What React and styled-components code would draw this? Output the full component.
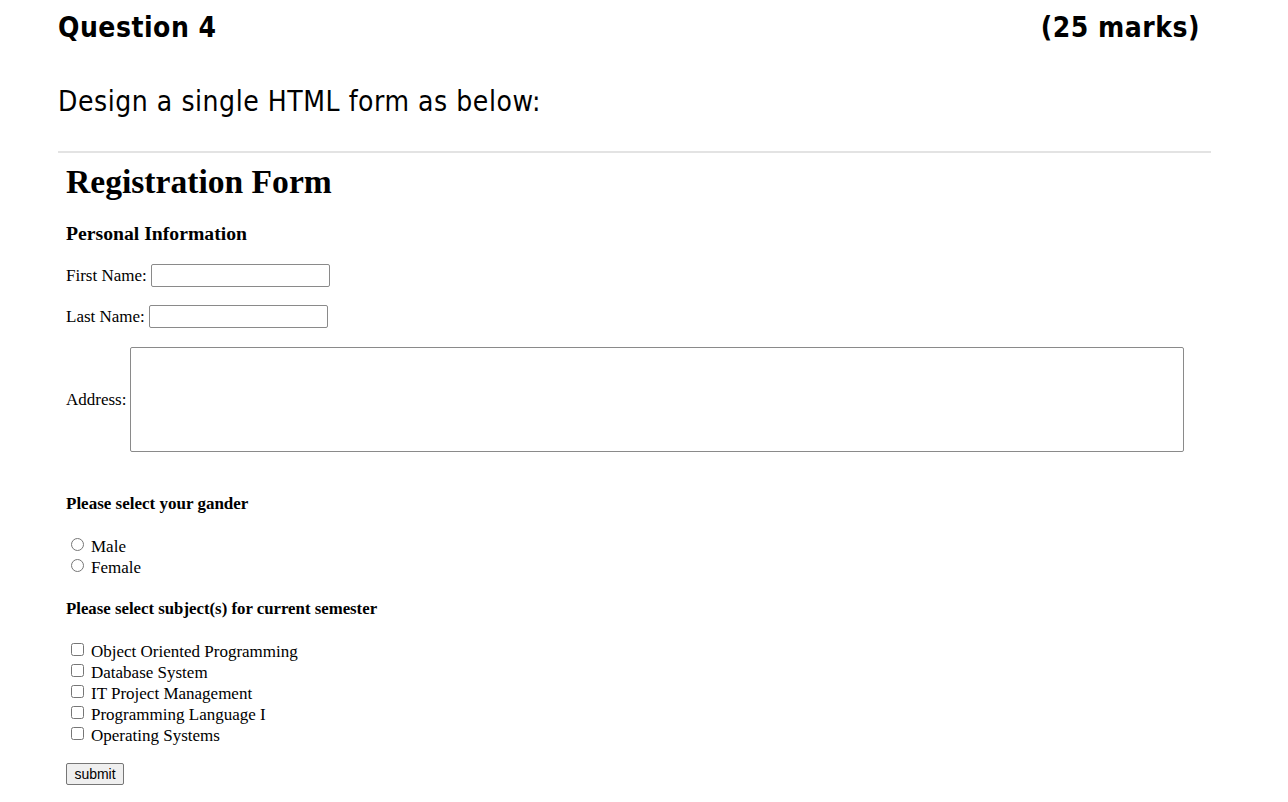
import React from "react";
import styled, { createGlobalStyle } from "styled-components";

const Global = createGlobalStyle`
  html, body { margin: 0; padding: 0; background: #fff; }
  body { font-family: "Liberation Serif", "Times New Roman", serif; color: #000; }
`;

const Page = styled.div`
  padding: 0 77px 0 58px;
`;

const HeaderRow = styled.div`
  display: flex;
  justify-content: space-between;
  align-items: baseline;
  padding: 8px 11px 0 0;
  font-family: "DejaVu Sans Condensed", "DejaVu Sans", Tahoma, sans-serif;
  font-weight: bold;
  font-size: 28px;
  line-height: 40px;
  letter-spacing: 0.5px;
`;

const Intro = styled.p`
  margin: 34px 0 0;
  font-family: "DejaVu Sans Condensed", "DejaVu Sans", Tahoma, sans-serif;
  font-size: 28px;
  line-height: 40px;
  letter-spacing: 0.55px;
`;

const Rule = styled.hr`
  margin: 29px 0 0;
  border: 0;
  height: 2px;
  background: #e3e3e3;
`;

const Form = styled.form`
  padding: 0 0 0 8px;
  font-size: 17px;
`;

const Title = styled.h1`
  margin: 7px 0 0;
  font-size: 33.6px;
  line-height: 44px;
  font-weight: bold;
`;

const Section = styled.h3`
  margin: ${(p) => p.$top}px 0 0;
  font-size: ${(p) => p.$size}px;
  line-height: 22px;
  font-weight: bold;
`;

const Row = styled.div`
  display: flex;
  align-items: center;
  margin-top: ${(p) => p.$top}px;
  line-height: 23px;
`;

const Label = styled.label`
  margin-right: 4px;
`;

const TextInput = styled.input`
  box-sizing: border-box;
  width: 179px;
  height: 23px;
  border: 1px solid #8a8a8a;
  border-radius: 2px;
  padding: 1px 2px;
  margin: 0;
  font: inherit;
`;

const Area = styled.textarea`
  box-sizing: border-box;
  width: 1054px;
  height: 105px;
  border: 1px solid #8a8a8a;
  border-radius: 2px;
  margin: 0;
  resize: none;
  font: inherit;
`;

const List = styled.div`
  margin-top: ${(p) => p.$top}px;
  display: flex;
  flex-direction: column;
`;

const Option = styled.label`
  display: flex;
  align-items: center;
  height: 21px;
  font-size: 17px;
`;

const Box = styled.input`
  width: 13px;
  height: 13px;
  margin: 0 7px 0 5px;
  position: relative;
  top: -2px;
`;

const Submit = styled.button`
  margin-top: 17px;
  box-sizing: border-box;
  width: 58px;
  height: 22px;
  padding: 0;
  font-family: "Liberation Sans", Arial, sans-serif;
  font-size: 14px;
  color: #000;
  background: #efefef;
  border: 1px solid #767676;
  border-radius: 2px;
`;

const subjects = [
  "Object Oriented Programming",
  "Database System",
  "IT Project Management",
  "Programming Language I",
  "Operating Systems",
];

export default function App() {
  return (
    <>
      <Global />
      <Page>
        <HeaderRow>
          <span>Question 4</span>
          <span>(25 marks)</span>
        </HeaderRow>
        <Intro>Design a single HTML form as below:</Intro>
        <Rule />
        <Form onSubmit={(e) => e.preventDefault()}>
          <Title>Registration Form</Title>
          <Section $top={18} $size={19.7}>Personal Information</Section>
          <Row $top={20}>
            <Label>First Name:</Label>
            <TextInput type="text" />
          </Row>
          <Row $top={18}>
            <Label>Last Name:</Label>
            <TextInput type="text" />
          </Row>
          <Row $top={19}>
            <Label>Address:</Label>
            <Area />
          </Row>
          <Section $top={41} $size={17}>Please select your gander</Section>
          <List $top={21}>
            <Option>
              <Box type="radio" name="g" />
              Male
            </Option>
            <Option>
              <Box type="radio" name="g" />
              Female
            </Option>
          </List>
          <Section $top={20} $size={16.8}>Please select subject(s) for current semester</Section>
          <List $top={21}>
            {subjects.map((s) => (
              <Option key={s}>
                <Box type="checkbox" />
                {s}
              </Option>
            ))}
          </List>
          <Submit type="submit">submit</Submit>
        </Form>
      </Page>
    </>
  );
}
